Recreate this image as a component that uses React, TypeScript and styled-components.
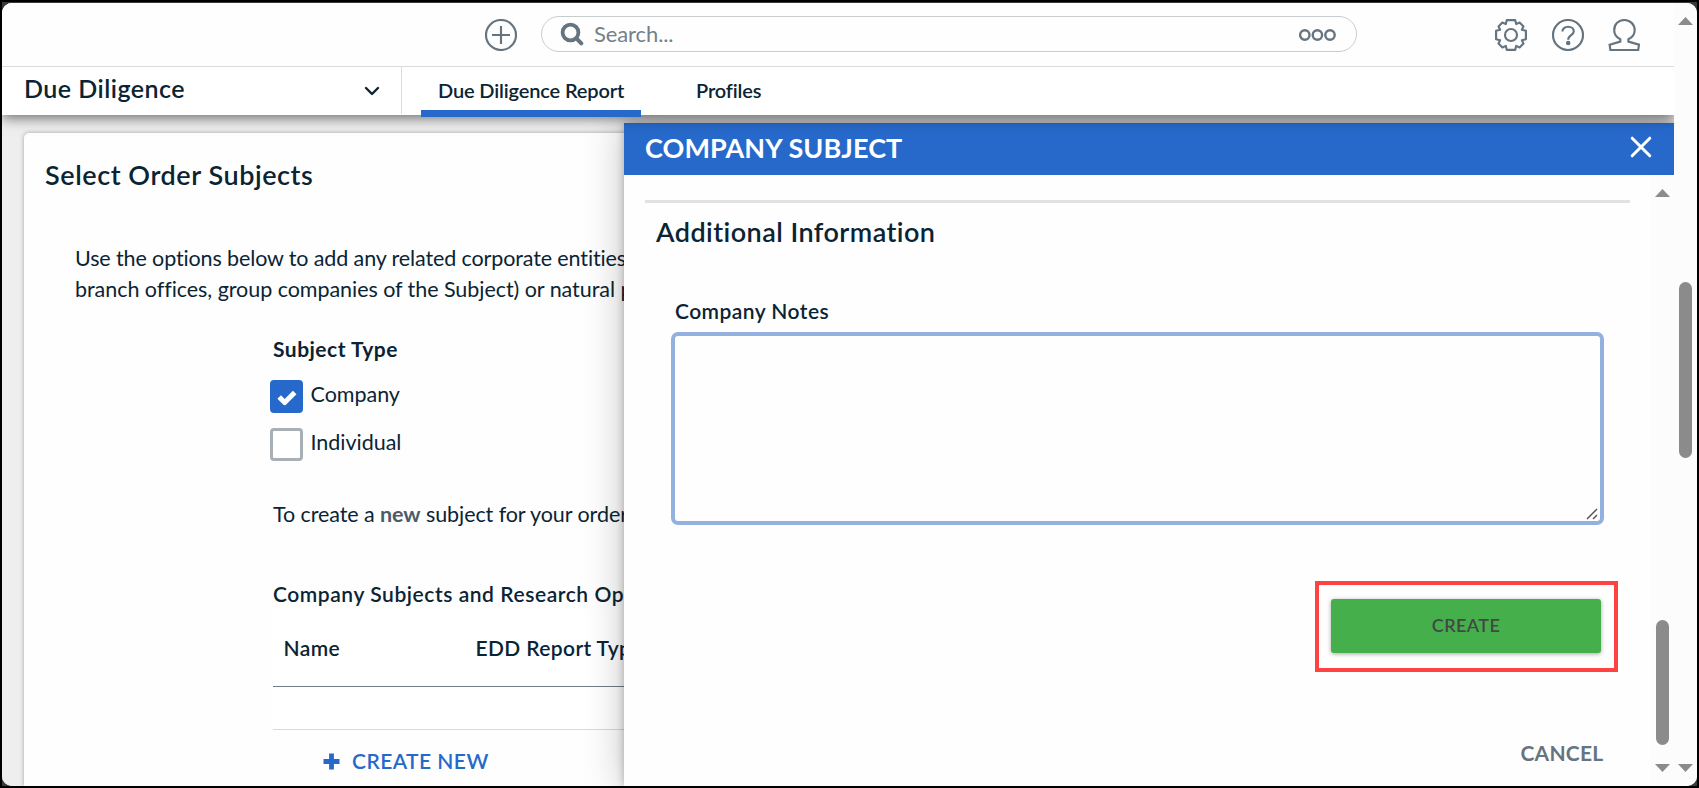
import React from "react";
import styled, { createGlobalStyle, css } from "styled-components";

const ink = "#0b2434";
const slate = "#65747f";
const blue = "#2769ca";

const GlobalStyle = createGlobalStyle`
  * { box-sizing: border-box; }
  body { margin: 0; overflow: hidden; font-family: "Lato", sans-serif; color: ${ink}; }
  h1, h2, h3, p { margin: 0; font-weight: 400; }
  button { border: 0; background: none; padding: 0; margin: 0; font-family: inherit; }
`;

const Frame = styled.div`
  width: 1699px;
  height: 788px;
  padding: 2px;
  background: #000;
`;
const Backdrop = styled.div`
  height: 100%;
  padding-top: 1px;
  background: #3a3a3a;
`;
const Window = styled.div`
  position: relative;
  display: flex;
  height: 100%;
  border-radius: 10px;
  overflow: hidden;
  background: #fefefe;
`;
const Content = styled.div`
  display: flex;
  flex-direction: column;
  width: 1672px;
  height: 100%;
  overflow: hidden;
  background: #eee;
`;

/* Top bar */
const Chrome = styled.div`
  position: relative;
  z-index: 2;
  flex: none;
  box-shadow: 0 3px 12px rgba(0, 0, 0, 0.55);
`;
const TopBar = styled.header`
  display: flex;
  align-items: center;
  height: 64px;
  padding-left: 483px;
  border-bottom: 1px solid #d9dbde;
  background: #fefefe;
`;
const TopIcon = styled.svg`
  flex: none;
  width: 32px;
  height: 32px;
  fill: none;
  stroke: ${slate};
  stroke-width: 2.15;
`;
const SearchBox = styled.div`
  display: flex;
  align-items: center;
  width: 816px;
  height: 36px;
  margin: 0 138px 2px 24px;
  padding: 0 20px 0 18px;
  border: 1px solid #c9cccc;
  border-radius: 18px;
  color: #74818a;
`;
const SearchText = styled.span`
  flex: 1;
  margin-left: 10px;
  font-size: 22px;
  letter-spacing: -0.1px;
  line-height: 34px;
`;
const Actions = styled.div`
  display: flex;
  gap: 24.5px;
`;

/* Navigation row */
const NavRow = styled.nav`
  display: flex;
  height: 48px;
  background: #fff;
`;
const ModulePicker = styled.div`
  display: flex;
  justify-content: space-between;
  width: 400px;
  height: 47px;
  padding: 0 21px 0 22px;
  border-right: 1px solid #d9dbde;
  font-size: 25px;
  font-weight: 600;
  letter-spacing: 0.48px;
  line-height: 43px;
`;
const Tabs = styled.div`
  display: flex;
  margin-left: 19px;
`;
const Tab = styled.div<{ $active?: boolean }>`
  height: 50px;
  padding: 0 17px;
  margin-right: 38px;
  font-size: 20px;
  font-weight: 600;
  letter-spacing: -0.14px;
  line-height: 47px;
  white-space: nowrap;
  ${(p) =>
    p.$active &&
    css`
      width: 220px;
      border-bottom: 7px solid ${blue};
    `}
`;

/* Order card */
const Card = styled.main`
  flex: 1;
  min-height: 0;
  margin: 18px 0 0 22px;
  overflow: hidden;
  border-radius: 5px 0 0 0;
  background: #fefefe;
  box-shadow: 0 0 4px rgba(40, 50, 60, 0.4);
`;
const CardTitle = styled.h1`
  padding: 25px 0 0 21px;
  font-size: 27px;
  font-weight: 600;
  letter-spacing: 0.56px;
  line-height: 33px;
`;
const Intro = styled.p`
  margin: 52px 0 0 51px;
  font-size: 21.5px;
  line-height: 31px;
  white-space: nowrap;
`;
const IntroLine = styled.span<{ $spacing: number }>`
  display: block;
  letter-spacing: ${(p) => p.$spacing}px;
`;
const Form = styled.section`
  margin: 29px 0 0 249px;
`;
const FieldLabel = styled.h3<{ $bold?: boolean }>`
  font-size: 21px;
  font-weight: ${(p) => (p.$bold ? 700 : 600)};
  letter-spacing: ${(p) => (p.$bold ? 0.48 : 0.56)}px;
  line-height: 30px;
  white-space: nowrap;
`;
const Choices = styled.div`
  display: flex;
  flex-direction: column;
  gap: 15px;
  margin: 16px 0 0 -3px;
`;
const Choice = styled.label`
  display: flex;
  gap: 7.5px;
  height: 33px;
  font-size: 21.5px;
  letter-spacing: -0.02px;
  line-height: 28px;
`;
const CheckBox = styled.span<{ $checked?: boolean }>`
  display: grid;
  place-items: center;
  width: 33px;
  height: 33px;
  padding-top: 3px;
  border: 3px solid ${(p) => (p.$checked ? blue : "#a8b0b6")};
  border-radius: 4px;
  background: ${(p) => (p.$checked ? blue : "#fff")};
`;
const Hint = styled.p`
  margin-top: 38px;
  font-size: 21.5px;
  letter-spacing: -0.08px;
  line-height: 30px;
  white-space: nowrap;
`;
const Strong = styled.b`
  color: #4a5c68;
  font-weight: 700;
`;
const SubjectSection = styled.div`
  margin-top: 50px;
`;
const Table = styled.div`
  width: 1000px;
  background: #fff;
`;
const HeadRow = styled.div`
  display: flex;
  height: 78px;
  padding: 24px 0 0 10.5px;
  border-bottom: 1px solid #737c84;
`;
const HeadCell = styled.div`
  width: 192px;
  font-size: 21px;
  font-weight: 600;
  letter-spacing: 0.38px;
  line-height: 30px;
  white-space: nowrap;
`;
const EmptyRow = styled.div`
  height: 43px;
  border-bottom: 1px solid #d6dada;
`;
const CreateNew = styled.button`
  display: flex;
  align-items: center;
  gap: 12.5px;
  margin: 16px 0 0 49.5px;
  color: ${blue};
  font-size: 21px;
  font-weight: 600;
  letter-spacing: 0.45px;
  line-height: 30px;
`;

/* Drawer laid over the page */
const Drawer = styled.aside`
  position: absolute;
  top: 120px;
  left: 622px;
  bottom: 0;
  width: 1050px;
  display: flex;
  flex-direction: column;
  z-index: 1;
  background: #fefefe;
  box-shadow: 0 0 8px rgba(0, 0, 0, 0.26), 0 0 36px 2px rgba(0, 0, 0, 0.22);
`;
const DrawerHead = styled.div`
  display: flex;
  justify-content: space-between;
  flex: none;
  height: 52px;
  padding: 0 22.5px 0 21px;
  background: ${blue};
  color: #fff;
`;
const DrawerTitle = styled.h2`
  font-size: 27px;
  font-weight: 700;
  letter-spacing: 0.1px;
  line-height: 50px;
`;
const CloseIcon = styled.svg`
  width: 22px;
  height: 22px;
  margin-top: 13px;
  stroke: #fff;
  stroke-width: 3;
  stroke-linecap: round;
`;
const DrawerMain = styled.div`
  display: flex;
  flex: 1;
  min-height: 0;
`;
const DrawerBody = styled.div`
  width: 1027px;
  padding: 25px 21px 0;
`;
const Section = styled.section`
  display: flex;
  flex-direction: column;
  border-top: 3px solid #e1e2e3;
`;
const SectionTitle = styled.h2`
  margin: 12px 0 0 11px;
  font-size: 27px;
  font-weight: 600;
  letter-spacing: 0.46px;
  line-height: 34px;
`;
const NotesLabel = styled(FieldLabel)`
  margin: 46px 0 0 30px;
  letter-spacing: 0.45px;
  line-height: 32px;
`;
const Notes = styled.div`
  display: flex;
  align-items: flex-end;
  justify-content: flex-end;
  width: 933px;
  height: 193px;
  margin: 5px 0 0 26px;
  padding: 1px 2px;
  border: 4px solid #92b1e1;
  border-radius: 7px;
`;
const Callout = styled.div`
  align-self: flex-end;
  width: 303px;
  height: 91px;
  margin: 56px 12px 0 0;
  padding: 14px 13px 0 12px;
  border: 4px solid #ff4343;
`;
const CreateButton = styled.button`
  display: block;
  width: 270px;
  height: 54px;
  padding-bottom: 2px;
  border-radius: 3px;
  background: #45b04b;
  box-shadow: 0 1px 4px rgba(0, 0, 0, 0.35);
  color: #444746;
  font-size: 18px;
  font-weight: 600;
  letter-spacing: 0.4px;
  line-height: 52px;
  text-align: center;
`;
const CancelButton = styled.button`
  align-self: flex-end;
  margin: 66px 26.5px 0 0;
  color: ${slate};
  font-size: 21px;
  font-weight: 700;
  letter-spacing: 0.25px;
  line-height: 30px;
`;

/* Scrollbars */
const ScrollTrack = styled.div<{ $lead: number }>`
  position: relative;
  z-index: 3;
  display: flex;
  flex-direction: column;
  align-items: center;
  flex: none;
  width: 23px;
  padding: ${(p) => p.$lead}px 0 14px;
  background: #fcfcfc;
`;
const Arrow = styled.i<{ $down?: boolean }>`
  width: 15px;
  height: 8px;
  background: #8b8b8b;
  clip-path: ${(p) =>
    p.$down ? "polygon(0 0, 100% 0, 50% 100%)" : "polygon(50% 0, 100% 100%, 0 100%)"};
`;
const Thumb = styled.div<{ $gap: number; $length: number }>`
  width: 13px;
  height: ${(p) => p.$length}px;
  margin: ${(p) => p.$gap}px 0 auto;
  border-radius: 7px;
  background: #8b8b8b;
`;

const Scrollbar = ({ lead, gap, length }: { lead: number; gap: number; length: number }) => (
  <ScrollTrack $lead={lead}>
    <Arrow />
    <Thumb $gap={gap} $length={length} />
    <Arrow $down />
  </ScrollTrack>
);

const gearCorner = [[-4.2, -14.9], [4.2, -14.9], [5.2, -10.9], [8.6, -12.5], [12.5, -8.6], [10.9, -5.2]];
const gearPoints = [0, 1, 2, 3]
  .flatMap((turn) =>
    gearCorner.map(([x, y]) => {
      let p = [x, y];
      for (let i = 0; i < turn; i++) p = [-p[1], p[0]];
      return `${p[0] + 16},${p[1] + 16}`;
    })
  )
  .join(" ");

export default function App() {
  return (
    <>
      <GlobalStyle />
      <Frame>
        <Backdrop>
          <Window>
            <Content>
              <Chrome>
                <TopBar>
                  <TopIcon viewBox="0 0 32 32">
                    <circle cx="16" cy="16" r="15" />
                    <path d="M16 7v18M7 16h18" />
                  </TopIcon>
                  <SearchBox>
                    <svg width="24" height="24" viewBox="0 0 24 24" fill="none" stroke={slate}>
                      <circle cx="10.5" cy="10.5" r="7.9" strokeWidth="3.8" />
                      <path d="M16.5 16.5l4.8 4.8" strokeWidth="4" strokeLinecap="round" />
                    </svg>
                    <SearchText>Search...</SearchText>
                    <svg width="38" height="16" viewBox="0 0 38 16" fill="none" stroke={slate} strokeWidth="2.4">
                      <circle cx="6.800" cy="9" r="4.700" />
                      <circle cx="19.400" cy="9" r="4.700" />
                      <circle cx="32" cy="9" r="4.700" />
                    </svg>
                  </SearchBox>
                  <Actions>
                    <TopIcon viewBox="0 0 32 32">
                      <polygon points={gearPoints} strokeLinejoin="round" />
                      <circle cx="16" cy="16" r="6" />
                    </TopIcon>
                    <TopIcon viewBox="0 0 32 32">
                      <circle cx="16" cy="16" r="15" />
                      <path d="M10.4 12.6c0-2.9 2.4-4.9 5.8-4.9s5.6 1.9 5.6 4.5c0 4.2-5.6 3.6-5.6 8.6" />
                      <circle cx="16.2" cy="23.9" r="1.2" fill={slate} />
                    </TopIcon>
                    <TopIcon viewBox="0 0 32 32">
                      <path d="M12.3 22.600V20.300C8.500 18.300 6.200 15.300 6.200 11.200 6.200 5.200 10.500 1 16.300 1S26.700 5.200 26.700 11.200C26.700 15.300 24.300 18.300 20.400 20.300V22.600L31 25.700 30.200 31H2.400L1.600 25.700Z" />
                    </TopIcon>
                  </Actions>
                </TopBar>
                <NavRow>
                  <ModulePicker>
                    Due Diligence
                    <svg width="16" height="46" viewBox="0 0 16 46" fill="none" stroke={ink} strokeWidth="2.4" strokeLinecap="round" strokeLinejoin="round">
                      <path d="M2 21l6 6 6-6" />
                    </svg>
                  </ModulePicker>
                  <Tabs>
                    <Tab $active>Due Diligence Report</Tab>
                    <Tab>Profiles</Tab>
                  </Tabs>
                </NavRow>
              </Chrome>
              <Card>
                <CardTitle>Select Order Subjects</CardTitle>
                <Intro>
                  <IntroLine $spacing={-0.12}>Use the options below to add any related corporate entities (e.g.</IntroLine>
                  <IntroLine $spacing={-0.05}>branch offices, group companies of the Subject) or natural persons</IntroLine>
                </Intro>
                <Form>
                  <FieldLabel $bold>Subject Type</FieldLabel>
                  <Choices>
                    <Choice>
                      <CheckBox $checked>
                        <svg width="20" height="16" viewBox="0 0 20 16" fill="none" stroke="#fff" strokeWidth="5">
                          <path d="M2.2 7l5.5 5.500 10-10" strokeLinejoin="round" />
                        </svg>
                      </CheckBox>
                      Company
                    </Choice>
                    <Choice>
                      <CheckBox />
                      Individual
                    </Choice>
                  </Choices>
                  <Hint>
                    To create a <Strong>new</Strong> subject for your order
                  </Hint>
                  <SubjectSection>
                    <FieldLabel>Company Subjects and Research Options</FieldLabel>
                    <Table>
                      <HeadRow>
                        <HeadCell>Name</HeadCell>
                        <HeadCell>EDD Report Type</HeadCell>
                      </HeadRow>
                      <EmptyRow />
                    </Table>
                    <CreateNew>
                      <svg width="17" height="17" viewBox="0 0 17 17" stroke={blue} strokeWidth="4.8">
                        <path d="M8.500 0.500v16M0.500 8.500h16" />
                      </svg>
                      CREATE NEW
                    </CreateNew>
                  </SubjectSection>
                </Form>
              </Card>
            </Content>
            <Drawer>
              <DrawerHead>
                <DrawerTitle>COMPANY SUBJECT</DrawerTitle>
                <CloseIcon viewBox="0 0 22 22">
                  <path d="M2.2 2.2l17.600 17.600M19.800 2.200L2.200 19.800" />
                </CloseIcon>
              </DrawerHead>
              <DrawerMain>
                <DrawerBody>
                  <Section>
                    <SectionTitle>Additional Information</SectionTitle>
                    <NotesLabel>Company Notes</NotesLabel>
                    <Notes>
                      <svg width="12" height="12" viewBox="0 0 12 12" stroke="#555" strokeWidth="1.5">
                        <path d="M1 11L11 1M7 11l4-4" />
                      </svg>
                    </Notes>
                    <Callout>
                      <CreateButton>CREATE</CreateButton>
                    </Callout>
                    <CancelButton>CANCEL</CancelButton>
                  </Section>
                </DrawerBody>
                <Scrollbar lead={14} gap={423} length={125} />
              </DrawerMain>
            </Drawer>
            <Scrollbar lead={14} gap={257} length={176} />
          </Window>
        </Backdrop>
      </Frame>
    </>
  );
}
